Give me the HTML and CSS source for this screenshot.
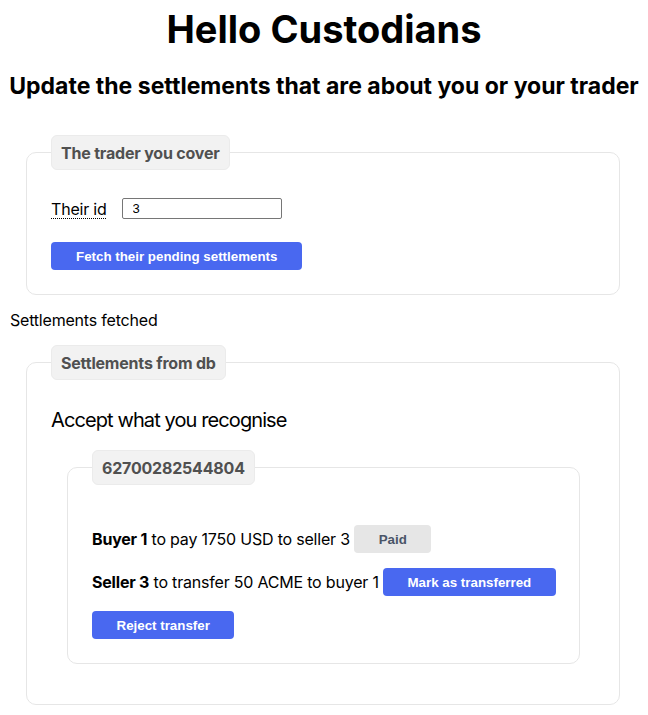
FILE: index.html
```html
<!DOCTYPE html>
<html lang="en">
<head>
<meta charset="utf-8">
<title>Hello Custodians</title>
<link rel="stylesheet" href="styles.css">
</head>
<body>
<h1 class="title">Hello Custodians</h1>
<h2 class="subtitle">Update the settlements that are about you or your trader</h2>

<fieldset class="panel">
  <legend class="panel-legend">The trader you cover</legend>
  <div class="field">
    <label class="field-label" for="trader-id"><abbr class="abbr" title="Trader identifier">Their id</abbr></label>
    <input class="field-input" id="trader-id" type="text" value="3">
  </div>
  <button class="btn btn-primary fetch-btn" type="button">Fetch their pending settlements</button>
</fieldset>

<p class="status">Settlements fetched</p>

<fieldset class="panel">
  <legend class="panel-legend">Settlements from db</legend>
  <p class="lead">Accept what you recognise</p>
  <fieldset class="panel panel-inner">
    <legend class="panel-legend">62700282544804</legend>
    <div class="rows">
      <div class="row"><b>Buyer 1</b> to pay 1750 USD to seller 3 <button class="btn btn-muted" type="button">Paid</button></div>
      <div class="row"><b>Seller 3</b> to transfer 50 ACME to buyer 1 <button class="btn btn-primary" type="button">Mark as transferred</button></div>
      <div class="row"><button class="btn btn-primary" type="button">Reject transfer</button></div>
    </div>
  </fieldset>
</fieldset>
</body>
</html>
```

FILE: styles.css
```css
html, body {
  background: #ffffff;
}
body {
  margin: 0 8px 8px;
  font-family: Inter, "Noto Sans", sans-serif;
  font-size: 16px;
  color: #000;
}
.title {
  margin: 6px 0 0;
  font-size: 38px;
  line-height: 46px;
  font-weight: 700;
  text-align: center;
}
.subtitle {
  margin: 20px 0 0;
  font-size: 23px;
  line-height: 28px;
  font-weight: 700;
  text-align: center;
}
.panel {
  margin: 35px 20px 0 18px;
  padding: 0 24px 24px;
  border: 1px solid #e6e6e6;
  border-radius: 10px;
  min-width: 0;
}
.panel-legend {
  padding: 0 9px;
  height: 35px;
  line-height: 35px;
  box-sizing: border-box;
  background: #f2f2f2;
  border: 1px solid #ebebeb;
  border-radius: 6px;
  font-weight: 700;
  font-size: 16px;
  letter-spacing: -0.2px;
  color: #505050;
}
.field {
  display: flex;
  align-items: center;
  gap: 15px;
  margin-top: 28px;
}
.field-label {
  letter-spacing: -0.2px;
}
.abbr {
  text-decoration: underline dotted;
  text-decoration-thickness: 1px;
  text-underline-offset: 3px;
}
.field-input {
  width: 160px;
  height: 21px;
  box-sizing: border-box;
  padding: 0 10px;
  border: 1px solid #767676;
  border-radius: 2px;
  font-family: "Liberation Sans", Arial, sans-serif;
  font-size: 13px;
  color: #000;
}
.btn {
  height: 28px;
  padding: 0 25px;
  border: none;
  border-radius: 4px;
  font-family: "Liberation Sans", Arial, sans-serif;
  font-weight: 700;
  font-size: 13.333px;
  letter-spacing: 0;
  vertical-align: top;
}
.btn-primary {
  background: #4968f0;
  color: #ffffff;
}
.btn-muted {
  background: #e6e6e6;
  color: #4a5568;
}
.fetch-btn {
  margin-top: 23px;
}
.status {
  margin: 15px 0 0 2px;
  letter-spacing: -0.2px;
}
.panel + .status + .panel {
  margin-top: 15px;
}
.lead {
  margin: 28px 0 0;
  font-size: 20px;
  letter-spacing: -0.9px;
}
.panel-inner {
  margin: 18px 15px 16px 16px;
}
.rows {
  display: flex;
  flex-direction: column;
  gap: 15px;
  margin-top: 40px;
}
.row {
  height: 28px;
  line-height: 28px;
  letter-spacing: -0.2px;
  white-space: nowrap;
}
.row .btn {
  padding: 0 24.5px;
}
```
